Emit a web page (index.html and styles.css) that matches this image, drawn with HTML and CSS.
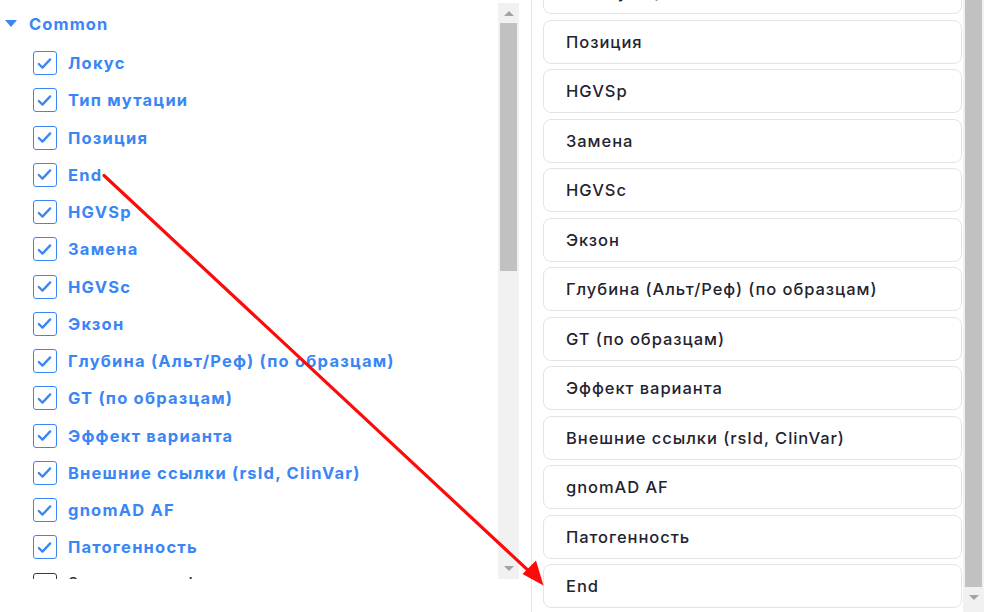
FILE: index.html
```html
<!DOCTYPE html>
<html lang="ru">
<head>
<meta charset="utf-8">
<title>Columns</title>
<link rel="stylesheet" href="styles.css">
</head>
<body>
<div class="app">
  <section class="left">
    <div class="tree">
      <div class="group-head"><span class="caret"></span><span class="group-title">Common</span></div>
      <ul class="items">
        <li class="item"><span class="cb checked"><svg viewBox="0 0 24 24"><path d="M5.5 12.5l4.2 4.2 8.8-9.4"/></svg></span><span class="label">Локус</span></li>
        <li class="item"><span class="cb checked"><svg viewBox="0 0 24 24"><path d="M5.5 12.5l4.2 4.2 8.8-9.4"/></svg></span><span class="label">Тип мутации</span></li>
        <li class="item"><span class="cb checked"><svg viewBox="0 0 24 24"><path d="M5.5 12.5l4.2 4.2 8.8-9.4"/></svg></span><span class="label">Позиция</span></li>
        <li class="item"><span class="cb checked"><svg viewBox="0 0 24 24"><path d="M5.5 12.5l4.2 4.2 8.8-9.4"/></svg></span><span class="label">End</span></li>
        <li class="item"><span class="cb checked"><svg viewBox="0 0 24 24"><path d="M5.5 12.5l4.2 4.2 8.8-9.4"/></svg></span><span class="label">HGVSp</span></li>
        <li class="item"><span class="cb checked"><svg viewBox="0 0 24 24"><path d="M5.5 12.5l4.2 4.2 8.8-9.4"/></svg></span><span class="label">Замена</span></li>
        <li class="item"><span class="cb checked"><svg viewBox="0 0 24 24"><path d="M5.5 12.5l4.2 4.2 8.8-9.4"/></svg></span><span class="label">HGVSc</span></li>
        <li class="item"><span class="cb checked"><svg viewBox="0 0 24 24"><path d="M5.5 12.5l4.2 4.2 8.8-9.4"/></svg></span><span class="label">Экзон</span></li>
        <li class="item"><span class="cb checked"><svg viewBox="0 0 24 24"><path d="M5.5 12.5l4.2 4.2 8.8-9.4"/></svg></span><span class="label">Глубина (Альт/Реф) (по образцам)</span></li>
        <li class="item"><span class="cb checked"><svg viewBox="0 0 24 24"><path d="M5.5 12.5l4.2 4.2 8.8-9.4"/></svg></span><span class="label">GT (по образцам)</span></li>
        <li class="item"><span class="cb checked"><svg viewBox="0 0 24 24"><path d="M5.5 12.5l4.2 4.2 8.8-9.4"/></svg></span><span class="label">Эффект варианта</span></li>
        <li class="item"><span class="cb checked"><svg viewBox="0 0 24 24"><path d="M5.5 12.5l4.2 4.2 8.8-9.4"/></svg></span><span class="label">Внешние ссылки (rsId, ClinVar)</span></li>
        <li class="item"><span class="cb checked"><svg viewBox="0 0 24 24"><path d="M5.5 12.5l4.2 4.2 8.8-9.4"/></svg></span><span class="label">gnomAD AF</span></li>
        <li class="item"><span class="cb checked"><svg viewBox="0 0 24 24"><path d="M5.5 12.5l4.2 4.2 8.8-9.4"/></svg></span><span class="label">Патогенность</span></li>
        <li class="item off"><span class="cb"></span><span class="label">Значимость фильтра</span></li>
      </ul>
    </div>
    <div class="sbar sbar-left">
      <span class="arr up"></span>
      <span class="thumb thumb-left"></span>
      <span class="fill"></span>
      <span class="arr down"></span>
    </div>
  </section>

  <section class="right">
    <div class="cards-wrap">
      <ul class="cards">
        <li class="card">Тип мутации</li>
        <li class="card">Позиция</li>
        <li class="card">HGVSp</li>
        <li class="card">Замена</li>
        <li class="card">HGVSc</li>
        <li class="card">Экзон</li>
        <li class="card">Глубина (Альт/Реф) (по образцам)</li>
        <li class="card">GT (по образцам)</li>
        <li class="card">Эффект варианта</li>
        <li class="card">Внешние ссылки (rsId, ClinVar)</li>
        <li class="card">gnomAD AF</li>
        <li class="card">Патогенность</li>
        <li class="card">End</li>
      </ul>
    </div>
    <div class="sbar sbar-right">
      <span class="thumb thumb-right"></span>
      <span class="arr down"></span>
    </div>
  </section>

  <svg class="drag-arrow" width="988" height="612" viewBox="0 0 988 612">
    <line x1="104" y1="175.5" x2="532" y2="574" />
    <polygon points="543.5,585.5 522.5,574 536,560.5" />
  </svg>
</div>
</body>
</html>
```

FILE: styles.css
```css
* { box-sizing: border-box; }

html, body {
  margin: 0;
  padding: 0;
  background: #ffffff;
}

body {
  font-family: Inter, "Noto Sans", "DejaVu Sans", sans-serif;
  width: 988px;
  height: 612px;
  overflow: hidden;
}

.app {
  position: relative;
  display: flex;
  width: 988px;
  height: 612px;
}

/* ---------- left: tree with checkboxes ---------- */
.left {
  width: 532px;
  height: 612px;
  display: flex;
  align-items: flex-start;
  border-right: 1px solid #e3e3e3;
  flex-shrink: 0;
}

.tree {
  width: 498px;
  height: 579px;
  overflow: hidden;
  padding: 5px 0 0 5px;
}

.group-head {
  height: 38px;
  display: flex;
  align-items: center;
  gap: 12px;
}

.caret {
  width: 0;
  height: 0;
  border-left: 6px solid transparent;
  border-right: 6px solid transparent;
  border-top: 7px solid #3b86f5;
  margin-top: -1px;
}

.group-title {
  font-size: 16.5px;
  font-weight: 700;
  letter-spacing: 1.1px;
  color: #3b86f5;
}

.items {
  list-style: none;
  margin: 1.4px 0 0 0;
  padding: 0 0 0 27.5px;
}

.item {
  height: 37.25px;
  display: flex;
  align-items: center;
  gap: 11.5px;
}

.cb {
  width: 24px;
  height: 24px;
  border: 1.5px solid #3b86f5;
  border-radius: 3px;
  background: #ffffff;
  display: flex;
  align-items: center;
  justify-content: center;
  flex-shrink: 0;
}

.cb svg {
  width: 21px;
  height: 21px;
  fill: none;
  stroke: #3b86f5;
  stroke-width: 2.6;
  stroke-linecap: round;
  stroke-linejoin: round;
}

.label {
  font-size: 16.5px;
  font-weight: 700;
  letter-spacing: 1.2px;
  color: #3b86f5;
  white-space: nowrap;
}

.item.off .cb {
  border-color: #3a3a3a;
}

.item.off .label {
  color: #333333;
  font-weight: 500;
  margin-top: -4px;
}

/* ---------- scrollbars ---------- */
.sbar {
  width: 21px;
  background: #f1f1f1;
  display: flex;
  flex-direction: column;
  align-items: center;
  flex-shrink: 0;
}

.sbar-left {
  height: 576px;
  margin-top: 3px;
}

.thumb {
  width: 17px;
  background: #c1c1c1;
  flex-shrink: 0;
}

.thumb-left {
  height: 248px;
}

.fill { flex: 1; }

.arr {
  width: 0;
  height: 0;
  flex-shrink: 0;
  border-left: 5px solid transparent;
  border-right: 5px solid transparent;
}

.arr.up {
  border-bottom: 5px solid #a3a3a3;
  margin: 8px 0 7px;
}

.arr.down {
  border-top: 5px solid #a3a3a3;
  margin: 8px 0 8px;
}

/* ---------- right: ordered cards ---------- */
.right {
  flex: 1;
  display: flex;
  height: 612px;
  padding: 0 5px 0 11px;
  gap: 1px;
}

.cards-wrap {
  width: 419px;
  height: 612px;
  overflow: hidden;
}

.cards {
  list-style: none;
  margin: -30px 0 0 0;
  padding: 0;
  display: flex;
  flex-direction: column;
  gap: 5.5px;
}

.card {
  height: 44px;
  border: 1px solid #e4e4e7;
  border-radius: 8px;
  display: flex;
  align-items: center;
  padding-left: 22px;
  font-size: 16.5px;
  font-weight: 500;
  letter-spacing: 0.95px;
  color: #1f2430;
  white-space: nowrap;
}

.sbar-right {
  height: 612px;
}

.thumb-right {
  height: 587px;
}

.sbar-right .arr.down {
  margin: 8px 0 0;
}

/* ---------- annotation arrow ---------- */
.drag-arrow {
  position: absolute;
  left: 0;
  top: 0;
  pointer-events: none;
}

.drag-arrow line {
  stroke: #ff0a0a;
  stroke-width: 3.2;
  stroke-linecap: round;
}

.drag-arrow polygon {
  fill: #ff0a0a;
}
```
